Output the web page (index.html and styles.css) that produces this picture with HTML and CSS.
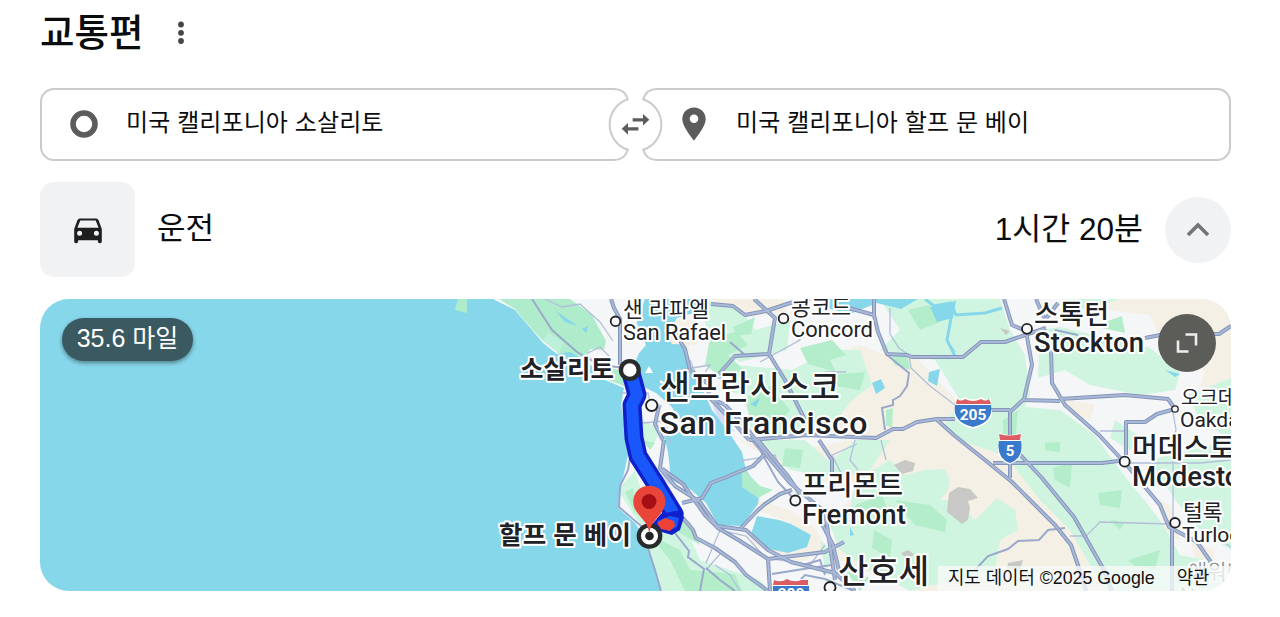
FILE: index.html
```
<!DOCTYPE html>
<html lang="ko">
<head>
<meta charset="utf-8">
<title>교통편</title>
<link rel="stylesheet" href="styles.css">
</head>
<body>
<main class="directions">
  <header class="head">
    <h1 class="title">교통편</h1>
    <svg class="more" width="8" height="24" viewBox="0 0 8 24"><g fill="#444746"><circle cx="4" cy="3.5" r="2.9"/><circle cx="4" cy="11.8" r="2.9"/><circle cx="4" cy="20" r="2.9"/></g></svg>
  </header>

  <section class="route">
    <div class="place from">
      <svg width="28" height="28" viewBox="0 0 28 28"><circle cx="14" cy="14" r="11" fill="none" stroke="#5c5c5c" stroke-width="5.6"/></svg>
      <span class="place-name">미국 캘리포니아 소살리토</span>
    </div>
    <svg class="swap" width="71" height="73" viewBox="0 0 71 73">
      <g fill="none" stroke="#cbcbcb" stroke-width="2">
        <path d="M0 1H14C21 1 26 5 27.800 11.200A26.700 26.700 0 0 0 27.800 61.800C26 68 21 72 14 72H0"/>
        <path d="M71 1H57C50 1 45 5 43.200 11.200A26.700 26.700 0 0 1 43.200 61.800C45 68 50 72 57 72H71"/>
      </g>
      <path fill="#5c5c5c" d="M32.600 30.200H43V26L49.300 31.800L43 37.500V33.400H32.600ZM38.400 39.200H28V35L21.700 40.800L28 46.700V42.400H38.400Z"/>
    </svg>
    <div class="place to">
      <svg width="24" height="34" viewBox="0 0 24 34"><path fill="#5c5c5c" fill-rule="evenodd" d="M12 .4C5.400.4.300 5.500.300 12C.300 20 12 33.500 12 33.500S23.700 20 23.700 12C23.700 5.500 18.600.4 12 .4ZM12 7.500A4.300 4.300 0 1 1 12 16.100A4.300 4.300 0 1 1 12 7.500Z"/></svg>
      <span class="place-name">미국 캘리포니아 할프 문 베이</span>
    </div>
  </section>

  <section class="mode">
    <div class="mode-icon">
      <svg width="28" height="26" viewBox="0 0 28 26"><path fill="#1f1f1f" fill-rule="evenodd" d="M6 .5H22Q24 .5 24.700 2.400L27.800 11V23.500Q27.800 25.200 26.100 25.200H25.600Q23.900 25.200 23.900 23.500V22.200H4.100V23.500Q4.100 25.200 2.400 25.200H1.900Q.2 25.200.2 23.500V11L3.300 2.400Q4 .5 6 .5ZM6.300 2.600L3.400 9.800H24.600L21.700 2.600ZM5.600 12.700A2.500 2.500 0 1 0 5.600 17.700A2.500 2.500 0 1 0 5.600 12.700ZM22.400 12.700A2.500 2.500 0 1 0 22.400 17.700A2.500 2.500 0 1 0 22.400 12.700Z"/></svg>
    </div>
    <span class="mode-name">운전</span>
    <span class="duration">1시간 20분</span>
    <div class="collapse"><svg width="24" height="16" viewBox="0 0 24 16"><path d="M2 13L12 3L22 13" fill="none" stroke="#70757a" stroke-width="3.600"/></svg></div>
  </section>

  <section class="map">
    <svg class="map-art" width="1191" height="292" viewBox="40 299 1191 292">
      <defs>
        <g id="roads">
          <path d="M611 299L614 308L620 319V365"/>
          <path d="M664 440L660 468L675 486L700 502L717 526L746 530L768 550L791 562L835 573L855 591"/>
          <path d="M659 406L655 424L663 440M662 469L683 484L705 515L718 528L740 541L768 559"/>
          <path d="M674 331L685 349L690 370L708 384L709 397L735 424L749 440M749 440L807 435L876 438L893 429L903 429L917 422L937 419H955"/>
          <path d="M709 397L725 405L746 427L769 458L790 483L825 512L835 580M758 440L787 475L800 494"/>
          <path d="M711 304L733 306L745 315L766 311L790 303L810 299M754 299L775 318L769 354L785 380L805 420M719 374L735 356L768 354M845 307L874 315L878 332L887 354L907 355L912 357H963L981 342H1005L1028 334L1046 328M874 315V299"/>
          <path d="M1004 299L1012 325L1026 331L1032 365L1024 399L1010 412V478M1024 400L1060 401M1010 410H990M936 419L955 436L985 460L1012 482L1055 525L1071 545L1081 574L1086 591"/>
          <path d="M1010 444L1042 478L1074 517L1104 570L1112 591M1051 350L1052 383L1065 405L1099 435L1125 463L1160 505L1169 527L1197 542L1231 591M1060 399L1125 395L1168 399L1175 409L1157 414L1145 422H1126V455"/>
          <path d="M993 463H1102L1126 460M1172 527V591M1145 338L1165 334H1219L1231 326M1036 299L1045 320L1058 303"/>
          <path d="M682 503L702 498L711 483L724 478L753 466L764 455M683 518L693 530L696 538L715 548L735 562L746 575L768 591M741 528L757 511L765 504L780 494L792 490M768 559L825 552L844 542M768 559L770 591"/>
          <path d="M819 440L832 460V473M820 520L833 545L840 575"/>
        </g>
      </defs>
      <rect x="40" y="299" width="1191" height="292" fill="#f5f6f7"/>

      <!-- dry terrain -->
      <g fill="#f5f0e5">
        <path d="M709 299H783L787 312L752 317L728 306ZM670 340L690 345L688 355L672 350Z"/>
        <path d="M838 352L860 345L885 355L910 352L930 372L960 405L1000 430L1030 470L1080 525L1100 591H915L840 560L830 520L870 480L860 440L820 430L845 395Z"/>
        <path d="M738 440L800 450L850 440L905 450L880 485L825 482L775 462ZM755 500L790 510L815 528L828 550L800 562L760 548L742 535L770 538L795 525L762 512Z"/>
        <path d="M1095 299H1231V392L1200 387L1205 370L1186 368L1165 350L1150 315L1105 310ZM1020 485L1045 482L1050 500L1034 510L1020 500Z"/>
        <path d="M1060 398L1095 405L1090 420L1070 412ZM1158 499L1170 505L1180 540L1165 535ZM1190 540L1215 550L1210 568L1195 558Z"/>
      </g>

      <!-- vegetation -->
      <g fill="#cff5e1">
        <path d="M700 299L740 308L755 330L790 320L787 350L740 362L710 345ZM735 365L792 370L830 350L860 350L872 385L850 402L830 430L790 440L745 425L760 400L725 390Z"/>
        <path d="M880 299H1000L1010 330L1025 355L1030 395L1015 430L1002 455L960 440L945 425L960 400L935 360L912 355L880 350L900 330Z"/>
        <path d="M1040 330L1060 327L1150 348L1180 372L1175 390L1140 395L1090 385L1065 370L1038 378ZM1120 299L1100 305L1070 312L1065 299Z"/>
        <path d="M1005 405L1060 410L1095 435L1120 470L1160 520L1180 555L1231 565V591H1105L1070 530L1040 500L1005 455Z"/>
        <path d="M1115 420L1145 440L1130 450L1110 438ZM1150 460L1231 440V550L1200 530L1175 500ZM1188 395L1231 378V440L1200 420Z"/>
        <path d="M855 480L890 460L905 475L925 470L945 469L950 480L948 490L940 500L955 500L975 520L997 498L1015 510L1018 530L1000 540L995 570L910 591L870 570L840 550L828 520L850 510Z"/>
        <path d="M760 440H805L830 462L855 440H890L870 470L835 478L790 470ZM645 535L680 515L700 560L760 580L770 591H662ZM820 540L835 555L825 570Z"/>
        <path d="M618 490L635 470L650 520L640 525ZM640 418L660 430L652 448L640 444Z"/>
      </g>
      <g fill="#b3edca">
        <path d="M710 338L736 332L748 345L728 355L744 370L728 382L705 365ZM733 327L755 317L751 334L737 336Z"/>
        <path d="M800 348L832 340L846 355L830 360L836 372L808 364ZM830 375L865 372L860 390L830 385ZM745 398L770 386L790 410L778 425L750 420Z"/>
        <path d="M908 310L930 305L940 322L920 330ZM890 357L907 352L910 370L895 365ZM886 410L893 408L892 428L886 425ZM1105 322L1122 316L1125 333L1098 327Z"/>
        <path d="M1045 443L1060 442L1060 452L1045 450ZM1053 468L1072 462L1070 488L1055 480ZM1098 493L1122 490L1120 508L1100 505ZM1110 520L1125 522L1120 530ZM1128 560L1160 550L1155 570L1135 566Z"/>
        <path d="M895 500L930 505L947 520L945 532L915 525ZM874 530L892 540L890 558L872 548ZM785 448L803 450L800 468L782 466ZM855 505L882 495L888 510L860 512Z"/>
        <path d="M650 535L680 550L690 570L735 574L742 591H685L670 560ZM660 505L690 522L700 545L675 530ZM845 570L870 578L860 591ZM642 440L655 443L650 450ZM625 492L633 488L636 515Z"/>
        <path d="M1003 420L1018 410L1015 445L1003 450ZM880 475L896 482L885 490Z"/>
      </g>
      <g fill="#c8c9c6"><path d="M894 465L905 460L915 463L913 471L902 474ZM949 493L958 487L970 489L978 498L968 501L970 508L968 520L962 524L947 512ZM901 553L908 550L914 554L908 561ZM1008 563L1023 560L1020 570L1007 569ZM1000 328L1010 331L1006 335Z"/></g>
      <path fill="#d5dcf3" d="M664 467L674 475L670 485L660 478ZM712 404L727 417L735 432L720 425Z"/>

      <!-- ocean and bays -->
      <g fill="#87d7ea">
        <path d="M40 299H493L515 310L532 330L543 343L557 354L570 351L588 362L605 380L624 388L621 405L625 428L628 455L622 482L618 508L635 523L645 538L655 568L661 591H40Z"/>
        <path d="M645 299H705L703 310L677 318L668 335L685 347L689 365L700 384L712 410L727 430L742 452L746 470L760 490L758 504L742 526L718 525L706 503L690 489L671 480L668 452L664 436L682 426L672 407L656 393L640 385L633 369L640 350L633 332Z"/>
        <path d="M757 516L779 520L791 524L811 535L807 547L788 553L765 548L751 534Z"/>
        <path d="M825 299H918L901 309L877 303L850 314L823 307ZM930 307L956 301L953 318L937 322ZM947 340L957 353L950 347ZM929 372L940 369L937 386L928 381ZM872 383L881 379L885 388L876 394ZM750 404L760 398L756 407ZM1165 370L1180 374L1175 377ZM850 527L854 535L850 536Z"/>
      </g>
      <path fill="none" stroke="#87d7ea" stroke-width="3" d="M925 299L934 306L951 303L956 315L985 313L1002 308M951 318L947 340L955 356"/>
      <path fill="#f5f6f7" d="M585 299H625L640 330L646 345L628 366L618 362L600 350Z"/>
      <path fill="#f5f0e5" d="M664 330L680 318L700 322L697 345L672 344Z"/>
      <g fill="#aeeccb">
        <path d="M458 299H467V313L455 310Z"/>
        <path d="M499 299H570L592 315L606 341L604 350L590 349L586 360L570 352L560 353L543 341L531 328L515 309Z"/>
        <path fill="#bdf0d8" d="M548 332L563 343L559 354L543 340Z"/>
        <path d="M590 357L605 366L624 372L624 386L608 380ZM742 468L760 486L773 490L758 498L742 487Z"/>
      </g>
      <path fill="#87d7ea" d="M556 311L578 326L565 322ZM582 329L588 326L586 333Z"/>
      <path fill="#fff" d="M649 366L653 373H645ZM660 380L669 385L660 383Z"/>

      <!-- minor roads -->
      <g fill="none" stroke="#b3bfda" stroke-width="1.300">
        <path d="M545 299L562 307L580 304L600 322L613 341M588 353L600 347L613 360M620 393L648 393L650 402L662 406M643 423L665 421L671 444"/>
        <path d="M890 308V334L899 348L909 355L911 368L930 386L955 405M881 440L886 460M857 444L832 455L842 475M855 440L850 460L858 470"/>
        <path d="M740 461L775 455L780 468M1100 431H1126M1173 412L1176 430L1173 440V520M1205 530L1231 547M1126 463L1200 463L1231 460"/>
        <path d="M706 563L720 530L746 536L763 555M720 554L706 570M715 565L730 575L740 591M768 558L810 565L825 545M1070 536H1086L1100 522L1170 524"/>
        <path d="M680 370L710 365L700 380L730 377M700 384L690 360M760 362L800 340L792 330M825 372L846 372"/>
      </g>
      <g fill="none" stroke="#9aa9cb" stroke-width="2">
        <path d="M887 355L909 373L907 386L900 396L893 400V405L882 408L885 430"/>
        <path d="M532 299L552 330L577 352L600 365L625 368M631 452L628 470L620 486L619 507L641 526L655 570L661 591M730 342L745 355M1055 330L1078 335"/>
        <path d="M675 533L689 551L688 557L704 569L700 591M706 568L720 580L735 591M975 570L988 556L1008 549L1018 541L1039 540L1048 530L1065 528"/>
        <path d="M772 574L810 568L832 565M803 565L820 560L825 575M854 591L825 579L805 575L790 591M750 438L760 450L778 482L795 500"/>
      </g>

      <!-- motorways: darker casing, then a lighter centre -->
      <use href="#roads" class="road-casing"/>
      <use href="#roads" class="road-centre"/>

      <!-- highlighted route -->
      <path fill="none" stroke="#1020ca" stroke-width="19" stroke-linejoin="round" d="M631 373L637 395L632 405L634 438L638 456L657 486L674 514L664 525"/>
      <path fill="none" stroke="#1a57fb" stroke-width="12" stroke-linejoin="round" d="M631 373L637 395L632 405L634 438L638 456L657 486L674 514L664 525"/>
      <path fill="#1020ca" d="M647 530L661 514L680 510L684 517L680 530L672 535L658 531Z"/>
      <path fill="#1a57fb" d="M657 521L670 516L679 518L677 527L668 531Z"/>
      <path fill="#ee4237" d="M657 523L665 518L674 521L675 526L670 531L661 529Z"/>

      <!-- interstate shields -->
      <g>
        <path fill="#fff" d="M955 398Q959 402 964 397Q973 402 982 397Q987 402 991 398Q988 404 992 411Q993 423 973 429Q953 423 954 411Q958 404 955 398Z"/>
        <path fill="#dc5c62" d="M957 399Q961 402 965 399Q973 403 981 399Q986 402 989 399L991 404H956Z"/><path fill="#3b79ca" d="M955 405H991Q994 422 973 427Q952 422 955 405Z"/>
        <text class="shield" x="973" y="420" font-size="15.500">205</text>
        <path fill="#fff" d="M998 433Q1010 437 1022 433Q1020 440 1022 449Q1022 461 1010 464Q997 461 998 449Q1001 441 998 433Z"/>
        <path fill="#dc5c62" d="M999 434Q1010 437 1021 434L1020 440H1000Z"/><path fill="#3b79ca" d="M999 441H1021Q1024 458 1010 463Q996 458 999 441Z"/>
        <text class="shield" x="1010" y="455.500" font-size="15">5</text>
        <path fill="#fff" d="M773 579H808V591H773Z"/><path fill="#dc5c62" d="M774 580Q781 583 787 579Q794 583 801 580L808 580V585H773Z"/><path fill="#3b79ca" d="M773 586H809V591H773Z"/>
        <text class="shield" x="791" y="599" font-size="15.500">280</text>
      </g>

      <!-- city dots -->
      <g fill="#f7f7f7" stroke="#202124" stroke-width="1.800">
        <circle cx="615.500" cy="321.300" r="4.800"/><circle cx="783.500" cy="318.500" r="4.800"/><circle cx="651.700" cy="405.300" r="5.700"/><circle cx="1027" cy="328.800" r="5"/><circle cx="795.300" cy="500.500" r="5"/><circle cx="1124.700" cy="461.700" r="5"/><circle cx="1175" cy="409" r="3.200" stroke-width="1.300"/><circle cx="1175" cy="522.800" r="4.800"/><circle cx="830" cy="587.500" r="5.500"/>
      </g>
      <circle cx="629.800" cy="370" r="8.900" fill="#fff" stroke="#282a2b" stroke-width="4.300"/>
      <circle cx="649.500" cy="536" r="10.700" fill="#fff" stroke="#282a2b" stroke-width="4.300"/><circle cx="649.500" cy="536" r="4.300" fill="#222"/>
      <path fill="#ea4539" d="M649.300 485.800C640 485.800 633.300 492.500 633.300 501.500C633.300 515 647.500 518 649.300 533.500C651 518 665.400 515 665.400 501.500C665.400 492.500 658.500 485.800 649.300 485.800Z"/>
      <circle cx="649" cy="501.500" r="7.400" fill="#a60f16"/>

      <!-- place labels -->
      <g class="label">
        <g font-weight="400">
          <text x="623" y="317" font-size="21.500" textLength="86">샌 라파엘</text>
          <text x="623" y="339.800" font-size="22" textLength="103">San Rafael</text>
          <text x="791" y="315" font-size="21.500" textLength="60">콩코드</text>
          <text x="791" y="337.200" font-size="22" textLength="82">Concord</text>
          <text x="1181" y="405" font-size="20">오크데일</text>
          <text x="1180" y="427" font-size="21">Oakdale</text>
          <text x="1183" y="520" font-size="21.500">털록</text>
          <text x="1182" y="542" font-size="21">Turlock</text>
        </g>
        <g font-weight="500">
          <text x="520" y="378" font-size="25.500" font-weight="700" textLength="94">소살리토</text>
          <text x="499" y="544" font-size="25.500" font-weight="700" textLength="132">할프 문 베이</text>
          <text x="660" y="399" font-size="32.500" textLength="180">샌프란시스코</text>
          <text x="659.500" y="433.500" font-size="32" textLength="208">San Francisco</text>
          <text x="1034" y="324" font-size="27" textLength="75">스톡턴</text>
          <text x="1034" y="351.500" font-size="27.500" textLength="110">Stockton</text>
          <text x="802" y="495" font-size="27.500" textLength="101">프리몬트</text>
          <text x="802" y="523.500" font-size="27.500" textLength="104">Fremont</text>
          <text x="1132" y="457.500" font-size="28">머데스토</text>
          <text x="1132" y="485.500" font-size="27.500">Modesto</text>
          <text x="838" y="582.500" font-size="33" textLength="91">산호세</text>
        </g>
        <text x="1188" y="579" font-size="21" fill="#999">애워터</text>
        <text x="1176" y="602" font-size="21" fill="#999">Atwater</text>
      </g>
    </svg>
    <div class="distance">35.6 마일</div>
    <div class="expand"><svg width="22" height="22" viewBox="0 0 22 22"><path d="M9.500 2.500H20V13.500M2 8.500V19.500H12.500" fill="none" stroke="#eee" stroke-width="2.600"/></svg></div>
    <div class="credits"><span class="copyright">지도 데이터 ©2025 Google</span><span class="terms">약관</span></div>
  </section>
</main>
</body>
</html>
```
FILE: styles.css
```
body { margin: 0; background: #fff; color: #0b0c0d; font-family: "Liberation Sans", "Noto Sans CJK KR", sans-serif; }
.directions { box-sizing: border-box; width: 1280px; height: 617px; padding: 0 49px 0 40px; overflow: hidden; }
.head { display: flex; align-items: center; height: 66px; padding-bottom: 22px; }
.title { margin: 0; font-size: 37.500px; line-height: 60px; font-weight: 500; white-space: nowrap; }
.more { margin-left: 33px; }
.route { display: grid; grid-template-columns: 1fr 71px 1fr; height: 73px; }
.place { box-sizing: border-box; min-width: 0; display: flex; align-items: center; border: 2px solid #cbcbcb; white-space: nowrap; }
.from { border-right: 0; border-radius: 14px 0 0 14px; padding-left: 28px; }
.to { border-left: 0; border-radius: 0 14px 14px 0; padding-left: 11px; }
.place svg { margin-bottom: 1px; }
.place-name { font-size: 24px; line-height: 36px; letter-spacing: .1px; margin-left: 28px; padding-bottom: 3px; }
.to .place-name { margin-left: 30px; }
.mode { display: flex; align-items: center; height: 95px; margin-top: 21px; }
.mode-icon { width: 95px; height: 95px; border-radius: 14px; background: #f1f2f4; display: flex; align-items: center; justify-content: center; box-sizing: border-box; padding-top: 3px; }
.mode-name { margin-left: 22px; font-size: 31px; line-height: 48px; padding-bottom: 1px; }
.duration { margin-left: auto; font-size: 31.500px; line-height: 48px; padding-bottom: 1px; white-space: nowrap; }
.collapse { width: 66px; height: 66px; margin-left: 22px; border-radius: 50%; background: #f1f2f4; display: flex; align-items: center; justify-content: center; }
.map { position: relative; height: 292px; margin-top: 22px; border-radius: 29px; overflow: hidden; }
.map-art { display: block; }
.road-casing, .road-centre { fill: none; stroke-linejoin: round; }
.road-casing { stroke: #8496b8; stroke-width: 4px; }
.road-centre { stroke: #a9b8d8; stroke-width: 2px; }
.label { font-family: Roboto, "Noto Sans CJK KR", sans-serif; fill: #202124; stroke: #fff; stroke-width: 4px; stroke-linejoin: round; paint-order: stroke; }
.shield { font-family: Roboto, sans-serif; font-weight: 700; fill: #fff; text-anchor: middle; }
.distance { position: absolute; left: 22px; top: 19px; width: 131px; height: 43px; border-radius: 22px; background: #3b5961; color: #fff; font-size: 25px; line-height: 41px; text-align: center; box-shadow: 0 2px 4px rgba(0, 0, 0, .4); white-space: nowrap; }
.expand { position: absolute; right: 15px; top: 15px; width: 58px; height: 58px; border-radius: 50%; background: #5c5d58; display: flex; align-items: center; justify-content: center; }
.credits { position: absolute; right: 0; bottom: 0; width: 293px; height: 25px; box-sizing: border-box; padding-left: 10px; display: flex; background: rgba(247, 250, 249, .78); color: #111; font-size: 17.800px; line-height: 24px; white-space: nowrap; }
.terms { margin-left: 22px; }
```
